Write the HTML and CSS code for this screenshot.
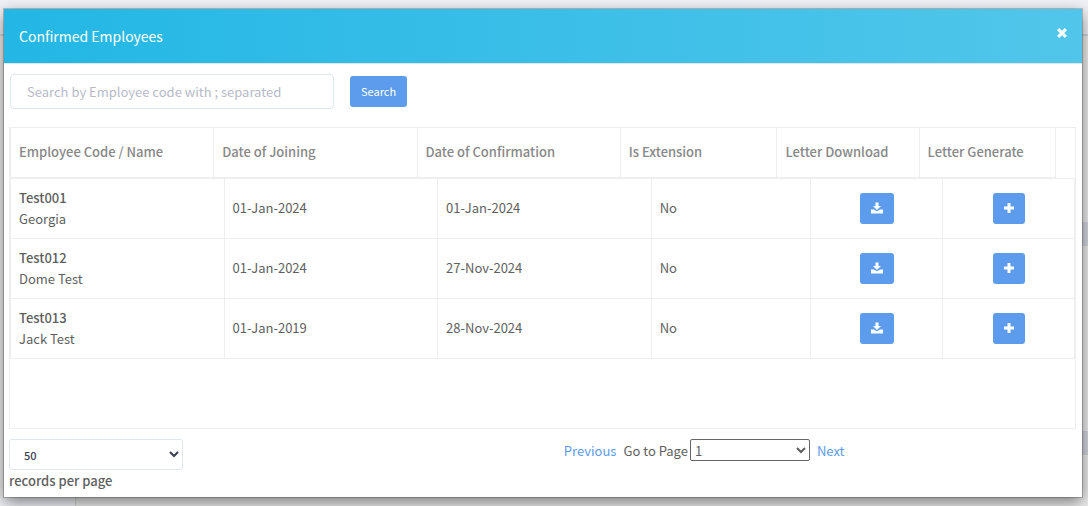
FILE: index.html
```html
<!DOCTYPE html>
<html lang="en">
<head>
<meta charset="utf-8">
<title>Confirmed Employees</title>
<link rel="stylesheet" href="styles.css">
</head>
<body>
<svg class="sprite" aria-hidden="true">
  <symbol id="icon-download" viewBox="0 0 12 12"><path d="M4.500 .5h3v3.500h2.500L6 8 2 4h2.500zM0 7.500h2.800L6 9.300l3.200-1.800H12V11.500H0z"/></symbol>
  <symbol id="icon-plus" viewBox="0 0 10 10"><path d="M3.500 0h3v3.500H10v3H6.500V10h-3V6.500H0v-3h3.500z"/></symbol>
  <symbol id="icon-close" viewBox="0 0 10 10"><path d="M2.200 0 5 2.800 7.800 0 10 2.200 7.200 5 10 7.800 7.800 10 5 7.200 2.200 10 0 7.800 2.800 5 0 2.200z"/></symbol>
</svg>
<main class="modal" role="dialog" aria-labelledby="title">
  <header class="modal-header">
    <h1 class="modal-title" id="title">Confirmed Employees</h1>
    <button class="close" type="button" aria-label="Close"><svg class="icon-small"><use href="#icon-close"/></svg></button>
  </header>
  <div class="modal-body">
    <form class="search">
      <input class="search-input" type="text" aria-label="Employee code" placeholder="Search by Employee code with ; separated">
      <button class="btn" type="button">Search</button>
    </form>
    <div class="grid">
      <table class="table table-head">
        <colgroup><col class="h-wide"><col class="h-wide"><col class="h-wide"><col class="h-ext"><col class="h-down"><col class="h-gen"></colgroup>
        <thead><tr><th>Employee Code / Name</th><th>Date of Joining</th><th>Date of Confirmation</th><th>Is Extension</th><th>Letter Download</th><th>Letter Generate</th></tr></thead>
      </table>
      <table class="table table-rows">
        <colgroup><col class="b-wide"><col class="b-wide"><col class="b-wide"><col class="b-ext"><col class="b-act"><col class="b-act"></colgroup>
        <tbody>
          <tr><td><strong>Test001</strong><br>Georgia</td><td>01-Jan-2024</td><td>01-Jan-2024</td><td>No</td>
            <td class="action"><button class="btn" type="button" aria-label="Download letter"><svg class="icon"><use href="#icon-download"/></svg></button></td>
            <td class="action"><button class="btn" type="button" aria-label="Generate letter"><svg class="icon-small"><use href="#icon-plus"/></svg></button></td></tr>
          <tr><td><strong>Test012</strong><br>Dome Test</td><td>01-Jan-2024</td><td>27-Nov-2024</td><td>No</td>
            <td class="action"><button class="btn" type="button" aria-label="Download letter"><svg class="icon"><use href="#icon-download"/></svg></button></td>
            <td class="action"><button class="btn" type="button" aria-label="Generate letter"><svg class="icon-small"><use href="#icon-plus"/></svg></button></td></tr>
          <tr><td><strong>Test013</strong><br>Jack Test</td><td>01-Jan-2019</td><td>28-Nov-2024</td><td>No</td>
            <td class="action"><button class="btn" type="button" aria-label="Download letter"><svg class="icon"><use href="#icon-download"/></svg></button></td>
            <td class="action"><button class="btn" type="button" aria-label="Generate letter"><svg class="icon-small"><use href="#icon-plus"/></svg></button></td></tr>
        </tbody>
      </table>
    </div>
    <footer class="footer">
      <div class="records">
        <select class="records-select" id="records"><option>50</option></select>
        <label class="records-label" for="records">records per page</label>
      </div>
      <nav class="pager" aria-label="Pages">
        <a class="link" href="#previous">Previous</a>
        <span class="goto"><label for="page">Go to Page</label>
        <select class="page-select" id="page"><option>1</option></select></span>
        <a class="link" href="#next">Next</a>
      </nav>
    </footer>
  </div>
</main>
</body>
</html>
```
FILE: styles.css
```css
* { box-sizing: border-box; }
body {
  margin: 0;
  padding: 9px 6px 9px 4px;
  color: #5f5f5f;
  font: 13px/21px "Noto Sans CJK SC", "Open Sans", sans-serif;
  background:
    linear-gradient(#d3d8df, #d3d8df) right 222px / 8px 24px no-repeat,
    linear-gradient(#d3d8df, #d3d8df) right 431px / 8px 24px no-repeat,
    linear-gradient(90deg, #f1f2f7 75px, #d4d5d9 75px, #d4d5d9 76px, transparent 76px) left bottom / 100% 9px no-repeat,
    linear-gradient(#f1f2f7 34px, #d0d9dc 34px, #d0d9dc 36px, #eeeeee 36px) no-repeat;
}
.sprite { display: none; }
.modal { background: #fff; box-shadow: 0 0 0 1px rgba(0, 0, 0, .2), 0 5px 15px rgba(0, 0, 0, .5); }
.modal-header {
  display: flex;
  justify-content: space-between;
  align-items: flex-start;
  padding: 17px 15px 16px;
  border-bottom: 1px solid #e5e5e5;
  background: linear-gradient(90deg, #23b7e5, #51c6ea) padding-box;
  color: #fff;
}
.modal-title { margin: 0; font-size: 14px; line-height: 21px; font-weight: 400; }
.close { display: flex; padding: 1px 0; border: 0; background: none; color: #fff; }
.icon, .icon-small { display: block; width: 12px; height: 12px; fill: currentColor; }
.icon-small { width: 10px; height: 10px; margin: 1px 0; }
.modal-body { padding: 10px 6px 6px 5px; }
.search { display: flex; align-items: center; gap: 16px; margin: 0 0 18px; padding-left: 1px; }
.search-input {
  width: 324px;
  height: 35px;
  padding: 6px 16px;
  border: 1px solid #dde6e9;
  border-radius: 4px;
  color: #3a3f51;
  font: inherit;
}
.search-input::placeholder { color: #b7bac9; opacity: 1; }
.btn {
  display: inline-flex;
  align-items: center;
  height: 31px;
  padding: 0 11px 2px;
  border: 0;
  border-radius: 3px;
  background: #5d9cec;
  color: #fff;
  font: 11px/18px "Noto Sans CJK SC", "Open Sans", sans-serif;
}
.grid { min-height: 302px; border: 1px solid #eee; }
.table { border-collapse: collapse; table-layout: fixed; }
.table-head { width: calc(100% - 19px); margin-top: -1px; }
.table-rows { width: 100%; }
th, td { padding: 7px 8px 9px; border: 1px solid #eee; text-align: left; }
th { height: 50px; color: #888; font-weight: 500; }
td { height: 60px; }
strong { font-weight: 500; }
.action { padding: 8px 8px 8px 10px; text-align: center; }
.action .btn { vertical-align: middle; }
.h-wide { width: 19.45%; }
.h-ext { width: 15%; }
.h-down { width: 13.6%; }
.h-gen { width: 13.05%; }
.b-wide { width: 20.05%; }
.b-ext { width: 14.95%; }
.b-act { width: 12.4%; }
.footer { display: grid; grid-template-columns: 52% 1fr; align-items: start; padding-top: 10px; }
.records { display: flex; flex-direction: column; align-items: flex-start; }
.records-select {
  width: 174px;
  height: 31px;
  padding: 4px 10px;
  border: 1px solid #dde6e9;
  border-radius: 3px;
  background: #fff;
  color: #3a3f51;
  font: 500 11px/18px "Noto Sans CJK SC", "Open Sans", sans-serif;
}
.records-label { font-weight: 500; }
.pager { display: flex; align-items: center; gap: 7px; }
.goto { display: flex; align-items: center; gap: 2px; }
.page-select { width: 120px; height: 22px; padding: 0; border: 1px solid #666; border-radius: 2px; background: #fff; color: inherit; font: inherit; }
.link { color: #5d9cec; text-decoration: none; }
```
